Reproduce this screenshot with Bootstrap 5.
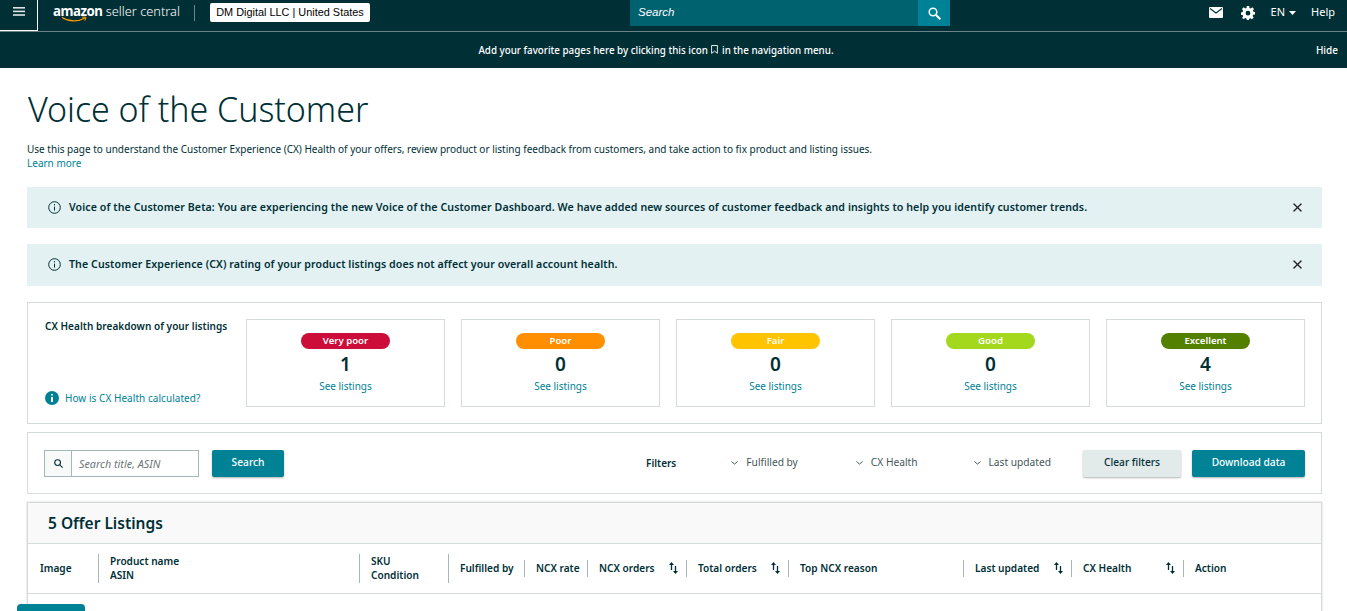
<!DOCTYPE html>
<html lang="en">
  <head>
    <meta charset="UTF-8" />
    <meta name="viewport" content="width=device-width, initial-scale=1.0" />
    <title>Voice of the Customer</title>
    <link href="https://cdn.jsdelivr.net/npm/bootstrap@5.3.3/dist/css/bootstrap.min.css" rel="stylesheet" />
    <style>
      html, body { height: 100vh; overflow: hidden; }
      body { font-family: "Noto Sans", "Liberation Sans", sans-serif; font-size: 10px; color: #0f1111; background: #fff; }
      a { color: #008296; text-decoration: none; }
      .sc-top { background: #002f36; color: #fff; }
      .sc-bar { height: 32px; border-bottom: 1px solid #6b8286; padding-bottom: 6px; }
      .sc-burger { width: 38px; height: 31px; border: 1px solid #fff; border-width: 0 1px 1px 0; padding-bottom: 7px; align-self: flex-start; }
      .sc-logo { margin-left: 15px; width: 127px; line-height: 20px; font-size: 12.8px; white-space: nowrap; position: relative; top: -2px; }
      .sc-logo b { font-weight: 700; font-size: 13.3px; letter-spacing: -.5px; }
      .sc-logo span { font-weight: 300; }
      .sc-smile { position: absolute; left: 8px; top: 15px; }
      .sc-divider { width: 1px; height: 16px; background: #6b8286; margin: 0 15px 0 14px; }
      .sc-merchant { background: #fff; color: #000; font: 10.9px/17px "Liberation Sans", sans-serif; border-radius: 2px; padding: 1px 5px; width: 160px; height: 19px; white-space: nowrap; text-align: center; }
      .sc-search { position: absolute; left: 630px; top: 0; width: 320px; height: 26px; }
      .sc-search-input { width: 288px; background: #00626f; font: italic 11.5px/25px "Liberation Sans", sans-serif; padding-left: 8px; }
      .sc-search-btn { width: 32px; background: #008296; }
      .sc-right { margin-left: auto; padding-right: 12px; font-size: 11px; }
      .sc-gear { margin-left: 18px; }
      .sc-help { margin-left: 15px; }
      .sc-fav { height: 36px; font-size: 9.8px; font-weight: 500; position: relative; padding: 2px 35px 0 0; }
      .sc-bookmark { margin: 0 1px; }
      .sc-hide { position: absolute; right: 9px; top: 11px; font-size: 10px; }
      .sc-main { padding: 21px 25px 0 27px; height: 543px; overflow: hidden; }
      .sc-title { font-size: 34px; font-weight: 300; line-height: 40px; margin: 0 0 13px 1px; color: #002f36; letter-spacing: -.05px; }
      .sc-desc { line-height: 14px; color: #002f36; margin-bottom: 16px; height: 29px; }
      .sc-alert { background: #e3f1f3; border: 0; border-radius: 0; color: #002f36; font-size: 10.6px; font-weight: 600; margin: 0 0 16px; padding: 0 19px 0 21px; height: 41px; letter-spacing: .09px; }
      .sc-alert.sc-tall { height: 42px; padding-bottom: 1px; }
      .sc-alert .btn-close { font-size: 11px; opacity: .85; padding: 0; }
      .sc-panel { border: 1px solid #d5dbdb; padding: 16px; }
      .sc-left { width: 185px; margin-left: 1px; flex: none; font-weight: 600; color: #002f36; letter-spacing: .05px; }
      .sc-how { gap: 6px; font-weight: 400; margin-bottom: 2px; }
      .sc-tile { flex: 1 1 0; height: 88px; border: 1px solid #d5dbdb; text-align: center; padding-top: 13px; }
      .sc-pill { display: block; width: 89px; height: 16px; margin: 0 auto; border-radius: 8px; font-size: 9.6px; font-weight: 600; line-height: 16px; color: #fff; }
      .sc-vp { background: #cc0c39; }
      .sc-po { background: #ff8f00; }
      .sc-fa { background: #ffc400; }
      .sc-go { background: #a4d81c; }
      .sc-ex { background: #538000; }
      .sc-count { font-size: 19px; font-weight: 600; line-height: 26px; margin: 2px 0; color: #002f36; }
      .sc-link { display: block; line-height: 14px; }
      .sc-filterbar { margin: 8px 0; height: 62px; padding: 0 16px; }
      .sc-addon { width: 27px; height: 27px; border: 1px solid #a6b5b8; border-right-width: 0; background: #f8f9f9; }
      .sc-input { width: 128px; height: 27px; border: 1px solid #a6b5b8; font-style: italic; font-size: 10.8px; color: #6c7778; padding: 0 7px; border-radius: 0; }
      .sc-input::placeholder { color: #6c7778; }
      .sc-btn { height: 27px; font-size: 10.2px; border-radius: 2px; border: 0; padding: 0; box-shadow: 0 1px 2px rgba(0, 0, 0, .3); font-weight: 500; }
      .sc-teal { background: #008296; color: #fff; }
      .sc-grey { background: #e3eaea; color: #002f36; }
      .sc-search-go { width: 72px; margin-left: 13px; }
      .sc-clear { width: 98px; margin-left: 32px; }
      .sc-download { width: 113px; margin-left: 11px; }
      .sc-filters { color: #002f36; }
      .sc-filter { margin-left: 55px; color: #44565a; font-size: 10.2px; }
      .sc-filter + .sc-filter { margin-left: 56px; }
      .sc-filter.sc-wide { margin-left: 58px; }
      .sc-listing { border: 1px solid #d5dbdb; box-shadow: 0 0 2px rgba(0, 0, 0, .2); }
      .sc-listing-head { background: #f9f9f9; height: 41px; border-bottom: 1px solid #d5dbdb; padding-left: 20px; font-size: 15.5px; font-weight: 600; line-height: 40px; color: #002f36; }
      .sc-table { table-layout: fixed; margin: 0; width: 1293px; }
      .sc-table th { padding: 0; height: 49px; vertical-align: middle; border-bottom: 1px solid #d5dbdb; font-weight: 600; font-size: 10.1px; line-height: 14px; color: #002f36; }
      .sc-table th.sc-first { padding-left: 12px; }
      .sc-table td { height: 100px; border: 0; }
      .sc-th { border-left: 1px solid #a6b5b8; padding: 0 8px 0 11px; min-height: 15px; display: flex; align-items: center; justify-content: space-between; white-space: nowrap; }
      .sc-th.sc-big { height: 29px; }
      .sc-th.sc-sort { height: 17px; }
      .sc-feedback { position: fixed; left: 17px; top: 604px; width: 68px; height: 7px; overflow: hidden; background: #008296; color: #fff; border-radius: 4px 4px 0 0; font-size: 10px; font-weight: 600; text-align: center; line-height: 22px; }
    </style>
  </head>

  <body>
    <header class="sc-top">
      <div class="sc-bar d-flex align-items-center position-relative">
        <div class="sc-burger d-flex align-items-center justify-content-center">
          <svg width="12" height="9" viewBox="0 0 12 9" fill="#dfe6e6"><rect width="12" height="1.6"/><rect y="3.6" width="12" height="1.6"/><rect y="7.2" width="12" height="1.6"/></svg>
        </div>
        <div class="sc-logo">
          <b>amazon</b> <span>seller central</span>
          <svg class="sc-smile" width="26" height="7" viewBox="0 0 26 7" fill="none"><path d="M1 1.5C8 6 17 6 24 2" stroke="#f90" stroke-width="1.2"/><path d="M21 1l4 .3-1.2 3.5" stroke="#f90" stroke-width="1"/></svg>
        </div>
        <div class="sc-divider"></div>
        <div class="sc-merchant">DM Digital LLC | United States</div>
        <div class="sc-search d-flex">
          <div class="sc-search-input">Search</div>
          <div class="sc-search-btn d-flex align-items-center justify-content-center">
            <svg width="13" height="13" viewBox="0 0 13 13" fill="none" stroke="#fff" stroke-width="1.5"><circle cx="5" cy="5" r="3.8"/><path d="M8 8l4.3 4.3" stroke-width="2"/></svg>
          </div>
        </div>
        <div class="sc-right d-flex align-items-center">
          <svg width="14" height="11" viewBox="0 0 14 11"><rect width="14" height="11" rx="1" fill="#fff"/><path d="M1 1.5l6 4.5 6-4.5" fill="none" stroke="#002f36" stroke-width="1.1"/></svg>
          <svg class="sc-gear" width="14" height="14" viewBox="0 0 14 14" fill="#fff"><path fill-rule="evenodd" d="M5.8 0h2.4l.3 1.9 1.2.5L11.3 1.3l1.7 1.7-1.1 1.6.5 1.2 1.6.3v2.4l-1.9.3-.5 1.2 1.1 1.6-1.7 1.7-1.6-1.1-1.2.5-.3 1.7H5.8l-.3-1.9-1.2-.5-1.6 1.1L1 11.9l1.1-1.6-.5-1.2L0 8.8V6.4l1.6-.3.5-1.2L1 3l1.7-1.7 1.6 1.1 1.2-.5zM7 4.8a2.4 2.4 0 1 0 0 4.8 2.4 2.4 0 0 0 0-4.8z"/></svg>
          <span class="ms-3">EN</span>
          <svg class="ms-1" width="7" height="4" viewBox="0 0 7 4" fill="#fff"><path d="M0 0h7L3.5 4z"/></svg>
          <span class="sc-help">Help</span>
        </div>
      </div>
      <div class="sc-fav d-flex align-items-center justify-content-center">
        <span>Add your favorite pages here by clicking this icon
          <svg class="sc-bookmark align-baseline" width="7" height="9" viewBox="0 0 7 9" fill="none" stroke="#fff" stroke-width=".9"><path d="M.6.5h5.8v7.8L3.5 6.2.6 8.3z"/></svg>
          in the navigation menu.</span>
        <span class="sc-hide">Hide</span>
      </div>
    </header>

    <main class="sc-main">
      <h1 class="sc-title">Voice of the Customer</h1>
      <p class="sc-desc">Use this page to understand the Customer Experience (CX) Health of your offers, review product or listing feedback from customers, and take action to fix product and listing issues.<br /><a href="#">Learn more</a></p>

      <div class="alert sc-alert d-flex align-items-center" role="alert">
        <svg class="me-2" width="13" height="13" viewBox="0 0 13 13" fill="none" stroke="#002f36"><circle cx="6.5" cy="6.5" r="5.8"/><path d="M6.5 5.6v4M6.5 3v1.3"/></svg>
        <span>Voice of the Customer Beta: You are experiencing the new Voice of the Customer Dashboard. We have added new sources of customer feedback and insights to help you identify customer trends.</span>
        <button type="button" class="btn-close ms-auto" aria-label="Close"></button>
      </div>
      <div class="alert sc-alert sc-tall d-flex align-items-center" role="alert">
        <svg class="me-2" width="13" height="13" viewBox="0 0 13 13" fill="none" stroke="#002f36"><circle cx="6.5" cy="6.5" r="5.8"/><path d="M6.5 5.6v4M6.5 3v1.3"/></svg>
        <span>The Customer Experience (CX) rating of your product listings does not affect your overall account health.</span>
        <button type="button" class="btn-close ms-auto" aria-label="Close"></button>
      </div>

      <section class="sc-panel d-flex gap-3">
        <div class="sc-left d-flex flex-column justify-content-between">
          <div>CX Health breakdown of your listings</div>
          <a class="sc-link sc-how d-flex align-items-center" href="#">
            <svg width="14" height="14" viewBox="0 0 14 14"><circle cx="7" cy="7" r="7" fill="#008296"/><path d="M7 6v5M7 3v1.6" stroke="#fff" stroke-width="2"/></svg>
            How is CX Health calculated?
          </a>
        </div>
        <div class="sc-tile"><span class="sc-pill sc-vp">Very poor</span><div class="sc-count">1</div><a class="sc-link" href="#">See listings</a></div>
        <div class="sc-tile"><span class="sc-pill sc-po">Poor</span><div class="sc-count">0</div><a class="sc-link" href="#">See listings</a></div>
        <div class="sc-tile"><span class="sc-pill sc-fa">Fair</span><div class="sc-count">0</div><a class="sc-link" href="#">See listings</a></div>
        <div class="sc-tile"><span class="sc-pill sc-go">Good</span><div class="sc-count">0</div><a class="sc-link" href="#">See listings</a></div>
        <div class="sc-tile"><span class="sc-pill sc-ex">Excellent</span><div class="sc-count">4</div><a class="sc-link" href="#">See listings</a></div>
      </section>

      <section class="sc-panel sc-filterbar d-flex align-items-center">
        <div class="sc-addon d-flex align-items-center justify-content-center">
          <svg width="9" height="9" viewBox="0 0 9 9" fill="none" stroke="#002f36" stroke-width="1.1"><circle cx="3.6" cy="3.6" r="2.9"/><path d="M5.8 5.8L8.6 8.6"/></svg>
        </div>
        <input class="sc-input" type="text" placeholder="Search title, ASIN" />
        <button type="button" class="btn sc-btn sc-teal sc-search-go">Search</button>
        <strong class="sc-filters ms-auto fw-semibold">Filters</strong>
        <div class="sc-filter d-flex align-items-center gap-2"><svg width="7" height="4" viewBox="0 0 7 4" fill="none" stroke="#44565a"><path d="M.5.5l3 2.6 3-2.6"/></svg>Fulfilled by</div>
        <div class="sc-filter sc-wide d-flex align-items-center gap-2"><svg width="7" height="4" viewBox="0 0 7 4" fill="none" stroke="#44565a"><path d="M.5.5l3 2.6 3-2.6"/></svg>CX Health</div>
        <div class="sc-filter d-flex align-items-center gap-2"><svg width="7" height="4" viewBox="0 0 7 4" fill="none" stroke="#44565a"><path d="M.5.5l3 2.6 3-2.6"/></svg>Last updated</div>
        <button type="button" class="btn sc-btn sc-grey sc-clear">Clear filters</button>
        <button type="button" class="btn sc-btn sc-teal sc-download">Download data</button>
      </section>

      <section class="sc-listing">
        <div class="sc-listing-head">5 Offer Listings</div>
        <table class="table sc-table">
          <colgroup>
            <col width="70" /><col width="261" /><col width="89" /><col width="76" /><col width="63" /><col width="99" /><col width="102" /><col width="175" /><col width="108" /><col width="112" /><col />
          </colgroup>
          <thead>
            <tr>
              <th class="sc-first">Image</th>
              <th><div class="sc-th sc-big d-block">Product name<br />ASIN</div></th>
              <th><div class="sc-th sc-big d-block">SKU<br />Condition</div></th>
              <th><div class="sc-th sc-big">Fulfilled by</div></th>
              <th><div class="sc-th sc-sort">NCX rate</div></th>
              <th><div class="sc-th sc-sort">NCX orders <svg width="9" height="12" viewBox="0 0 9 12" stroke="#002f36" fill="#002f36"><path d="M2.5 8V2M6.5 4v6" fill="none" stroke-width="1.3"/><path d="M0 3L2.5 0 5 3zM4 9l2.5 3L9 9z" stroke="none"/></svg></div></th>
              <th><div class="sc-th sc-sort">Total orders <svg width="9" height="12" viewBox="0 0 9 12" stroke="#002f36" fill="#002f36"><path d="M2.5 8V2M6.5 4v6" fill="none" stroke-width="1.3"/><path d="M0 3L2.5 0 5 3zM4 9l2.5 3L9 9z" stroke="none"/></svg></div></th>
              <th><div class="sc-th sc-sort">Top NCX reason</div></th>
              <th><div class="sc-th sc-sort">Last updated <svg width="9" height="12" viewBox="0 0 9 12" stroke="#002f36" fill="#002f36"><path d="M2.5 8V2M6.5 4v6" fill="none" stroke-width="1.3"/><path d="M0 3L2.5 0 5 3zM4 9l2.5 3L9 9z" stroke="none"/></svg></div></th>
              <th><div class="sc-th sc-sort">CX Health <svg width="9" height="12" viewBox="0 0 9 12" stroke="#002f36" fill="#002f36"><path d="M2.5 8V2M6.5 4v6" fill="none" stroke-width="1.3"/><path d="M0 3L2.5 0 5 3zM4 9l2.5 3L9 9z" stroke="none"/></svg></div></th>
              <th><div class="sc-th sc-sort">Action</div></th>
            </tr>
          </thead>
          <tbody>
            <tr><td colspan="11"></td></tr>
          </tbody>
        </table>
      </section>
    </main>

    <div class="sc-feedback">FEEDBACK</div>
    <script src="https://cdn.jsdelivr.net/npm/bootstrap@5.3.3/dist/js/bootstrap.bundle.min.js"></script>
  </body>
</html>
